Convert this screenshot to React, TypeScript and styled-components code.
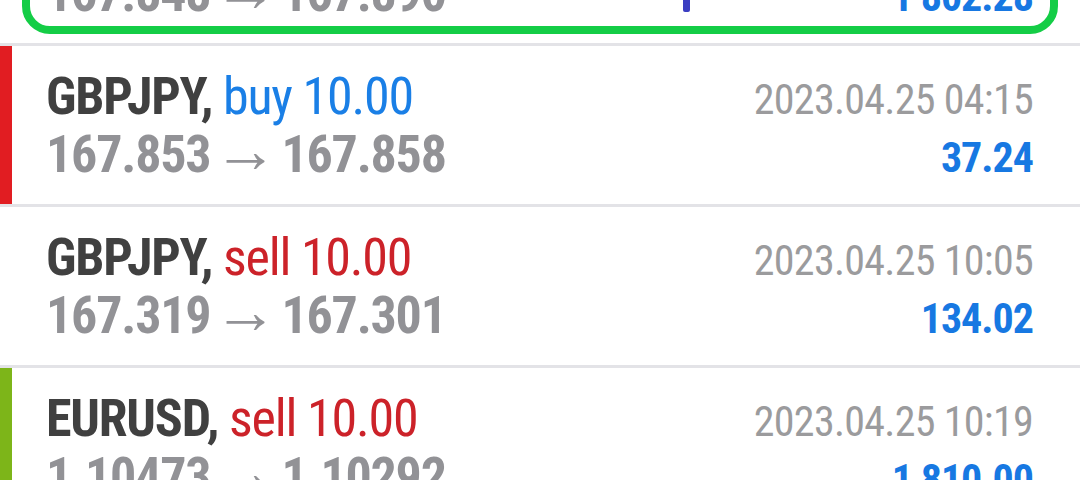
import React from "react";
import styled, { createGlobalStyle } from "styled-components";

const GlobalStyle = createGlobalStyle`
  html, body {
    margin: 0;
    padding: 0;
    background: #ffffff;
    overflow: hidden;
  }
  body {
    font-family: "Roboto Condensed", "Roboto", "Liberation Sans Narrow", sans-serif;
  }
`;

interface Deal {
  symbol: string;
  side: "buy" | "sell";
  volume: string;
  open: string;
  close: string;
  time: string;
  profit: string;
  marker?: "red" | "green";
  highlighted?: boolean;
}

const deals: Deal[] = [
  {
    symbol: "GBPJPY",
    side: "buy",
    volume: "10.00",
    open: "167.848",
    close: "167.890",
    time: "2023.04.25 03:40",
    profit: "1 802.28",
    highlighted: true,
  },
  {
    symbol: "GBPJPY",
    side: "buy",
    volume: "10.00",
    open: "167.853",
    close: "167.858",
    time: "2023.04.25 04:15",
    profit: "37.24",
    marker: "red",
  },
  {
    symbol: "GBPJPY",
    side: "sell",
    volume: "10.00",
    open: "167.319",
    close: "167.301",
    time: "2023.04.25 10:05",
    profit: "134.02",
  },
  {
    symbol: "EURUSD",
    side: "sell",
    volume: "10.00",
    open: "1.10473",
    close: "1.10292",
    time: "2023.04.25 10:19",
    profit: "1 810.00",
    marker: "green",
  },
];

const App = () => {
  return (
    <>
      <GlobalStyle />
      <List>
        {deals.map((d, i) => (
          <Row key={i}>
            {d.marker && <Marker color={d.marker} />}
            {d.highlighted && (
              <Highlight>
                <PenMark />
              </Highlight>
            )}
            <Line>
              <Title>
                <Symbol>{d.symbol},</Symbol> <Side side={d.side}>{d.side} {d.volume}</Side>
              </Title>
              <Time>{d.time}</Time>
            </Line>
            <Line>
              <Prices>
                {d.open}
                <Arrow>→</Arrow>
                {d.close}
              </Prices>
              <Profit>{d.profit}</Profit>
            </Line>
          </Row>
        ))}
      </List>
    </>
  );
};

const List = styled.div`
  display: flex;
  flex-direction: column;
  margin-top: -118px;
`;

const Row = styled.div`
  position: relative;
  height: 158px;
  box-sizing: content-box;
  border-top: 3px solid #e3e3e7;
  padding: 0 47px 0 46px;
  display: flex;
  flex-direction: column;
  justify-content: center;
`;

const Marker = styled.div<{ color: "red" | "green" }>`
  position: absolute;
  left: 0;
  top: 0;
  bottom: 0;
  width: 12px;
  background: ${(p) => (p.color === "red" ? "#e11d22" : "#7db519")};
`;

const Highlight = styled.div`
  position: absolute;
  left: 22px;
  right: 22px;
  top: 8px;
  bottom: 9px;
  border: 8px solid #14cd46;
  border-radius: 28px;
  box-sizing: border-box;
  pointer-events: none;
`;

const PenMark = styled.span`
  position: absolute;
  left: 653px;
  bottom: 14px;
  width: 7px;
  height: 14px;
  border-radius: 2px;
  background: #3b3ec2;
`;

const Line = styled.div`
  display: flex;
  justify-content: space-between;
  align-items: baseline;
  height: 56px;
  line-height: 56px;
`;

const Title = styled.div`
  font-size: 52px;
  letter-spacing: -1.2px;
  white-space: nowrap;
`;

const Symbol = styled.span`
  font-weight: 700;
  color: #404040;
`;

const Side = styled.span<{ side: "buy" | "sell" }>`
  font-weight: 400;
  color: ${(p) => (p.side === "buy" ? "#1a7fe6" : "#cc2229")};
`;

const Time = styled.div`
  font-size: 42px;
  font-weight: 400;
  letter-spacing: -0.7px;
  color: #9b9b9d;
  white-space: nowrap;
`;

const Prices = styled.div`
  font-size: 52px;
  font-weight: 700;
  letter-spacing: -1.2px;
  color: #929296;
  white-space: nowrap;
`;

const Arrow = styled.span`
  display: inline-block;
  font-size: 64px;
  line-height: 52px;
  font-weight: 500;
  letter-spacing: 0;
  margin: 0 4px 0 3px;
`;

const Profit = styled.div`
  font-size: 42px;
  font-weight: 700;
  letter-spacing: -1px;
  color: #1778e2;
  white-space: nowrap;
`;

export default App;
